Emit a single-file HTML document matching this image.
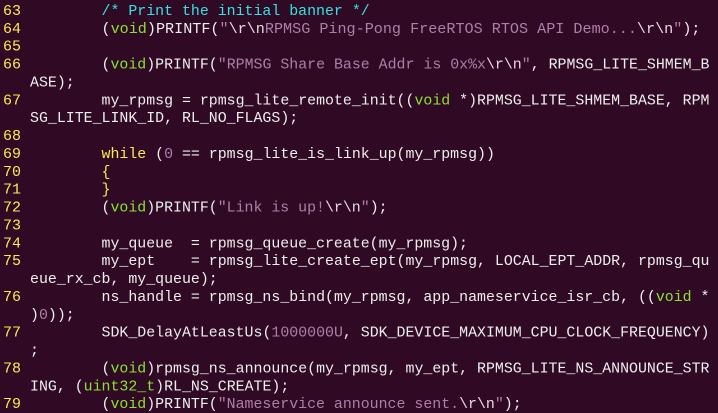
<!DOCTYPE html>
<html><head><meta charset="utf-8"><style>
html,body{margin:0;padding:0;background:#300a24;width:718px;height:413px;overflow:hidden}
svg{display:block}
text{font-family:"Liberation Mono","DejaVu Sans Mono",monospace;font-size:15px;fill:#eeeeec;white-space:pre}
.n{fill:#fce94f}
.c{fill:#34e2e2}.g{fill:#8ae234}.s{fill:#ad7fa8}.y{fill:#fce94f}.p{fill:#e8d8e4}
</style></head><body>
<svg width="718" height="413" viewBox="0 0 718 413" xml:space="preserve">
<rect width="718" height="413" fill="#300a24"/>
<text class="n" x="3" y="15">63</text>
<text x="101.5" y="15" textLength="268.2" lengthAdjust="spacingAndGlyphs"><tspan class="c">/* Print the initial banner */</tspan></text>
<text class="n" x="3" y="32.9">64</text>
<text x="101.5" y="32.9" textLength="599" lengthAdjust="spacingAndGlyphs">(<tspan class="g">void</tspan>)PRINTF(<tspan class="s">"</tspan><tspan class="p">\r\n</tspan><tspan class="s">RPMSG Ping-Pong FreeRTOS RTOS API Demo...</tspan><tspan class="p">\r\n</tspan><tspan class="s">"</tspan>);</text>
<text class="n" x="3" y="50.7">65</text>
<text class="n" x="3" y="68.6">66</text>
<text x="101.5" y="68.6" textLength="608" lengthAdjust="spacingAndGlyphs">(<tspan class="g">void</tspan>)PRINTF(<tspan class="s">"RPMSG Share Base Addr is 0x%x</tspan><tspan class="p">\r\n</tspan><tspan class="s">"</tspan>, RPMSG_LITE_SHMEM_B</text>
<text x="30" y="86.5" textLength="44.7" lengthAdjust="spacingAndGlyphs">ASE);</text>
<text class="n" x="3" y="104.4">67</text>
<text x="101.5" y="104.4" textLength="608" lengthAdjust="spacingAndGlyphs">my_rpmsg = rpmsg_lite_remote_init((<tspan class="g">void</tspan> *)RPMSG_LITE_SHMEM_BASE, RPM</text>
<text x="30" y="122.2" textLength="268.2" lengthAdjust="spacingAndGlyphs">SG_LITE_LINK_ID, RL_NO_FLAGS);</text>
<text class="n" x="3" y="140.1">68</text>
<text class="n" x="3" y="158">69</text>
<text x="101.5" y="158" textLength="393.4" lengthAdjust="spacingAndGlyphs"><tspan class="y">while</tspan> (<tspan class="s">0</tspan> == rpmsg_lite_is_link_up(my_rpmsg))</text>
<text class="n" x="3" y="175.8">70</text>
<text x="101.5" y="175.8" class="y">{</text>
<text class="n" x="3" y="193.7">71</text>
<text x="101.5" y="193.7" class="y">}</text>
<text class="n" x="3" y="211.6">72</text>
<text x="101.5" y="211.6" textLength="286.1" lengthAdjust="spacingAndGlyphs">(<tspan class="g">void</tspan>)PRINTF(<tspan class="s">"Link is up!</tspan><tspan class="p">\r\n</tspan><tspan class="s">"</tspan>);</text>
<text class="n" x="3" y="229.4">73</text>
<text class="n" x="3" y="247.3">74</text>
<text x="101.5" y="247.3" textLength="366.5" lengthAdjust="spacingAndGlyphs">my_queue  = rpmsg_queue_create(my_rpmsg);</text>
<text class="n" x="3" y="265.2">75</text>
<text x="101.5" y="265.2" textLength="608" lengthAdjust="spacingAndGlyphs">my_ept    = rpmsg_lite_create_ept(my_rpmsg, LOCAL_EPT_ADDR, rpmsg_qu</text>
<text x="30" y="283" textLength="187.7" lengthAdjust="spacingAndGlyphs">eue_rx_cb, my_queue);</text>
<text class="n" x="3" y="300.9">76</text>
<text x="101.5" y="300.9" textLength="608" lengthAdjust="spacingAndGlyphs">ns_handle = rpmsg_ns_bind(my_rpmsg, app_nameservice_isr_cb, ((<tspan class="g">void</tspan> *</text>
<text x="30" y="318.8" textLength="44.7" lengthAdjust="spacingAndGlyphs">)<tspan class="s">0</tspan>));</text>
<text class="n" x="3" y="336.7">77</text>
<text x="101.5" y="336.7" textLength="608" lengthAdjust="spacingAndGlyphs">SDK_DelayAtLeastUs(<tspan class="s">1000000U</tspan>, SDK_DEVICE_MAXIMUM_CPU_CLOCK_FREQUENCY)</text>
<text x="30" y="354.5">;</text>
<text class="n" x="3" y="372.4">78</text>
<text x="101.5" y="372.4" textLength="608" lengthAdjust="spacingAndGlyphs">(<tspan class="g">void</tspan>)rpmsg_ns_announce(my_rpmsg, my_ept, RPMSG_LITE_NS_ANNOUNCE_STR</text>
<text x="30" y="390.3" textLength="259.3" lengthAdjust="spacingAndGlyphs">ING, (<tspan class="g">uint32_t</tspan>)RL_NS_CREATE);</text>
<text class="n" x="3" y="408.1">79</text>
<text x="101.5" y="408.1" textLength="420.2" lengthAdjust="spacingAndGlyphs">(<tspan class="g">void</tspan>)PRINTF(<tspan class="s">"Nameservice announce sent.</tspan><tspan class="p">\r\n</tspan><tspan class="s">"</tspan>);</text>
</svg>
</body></html>
